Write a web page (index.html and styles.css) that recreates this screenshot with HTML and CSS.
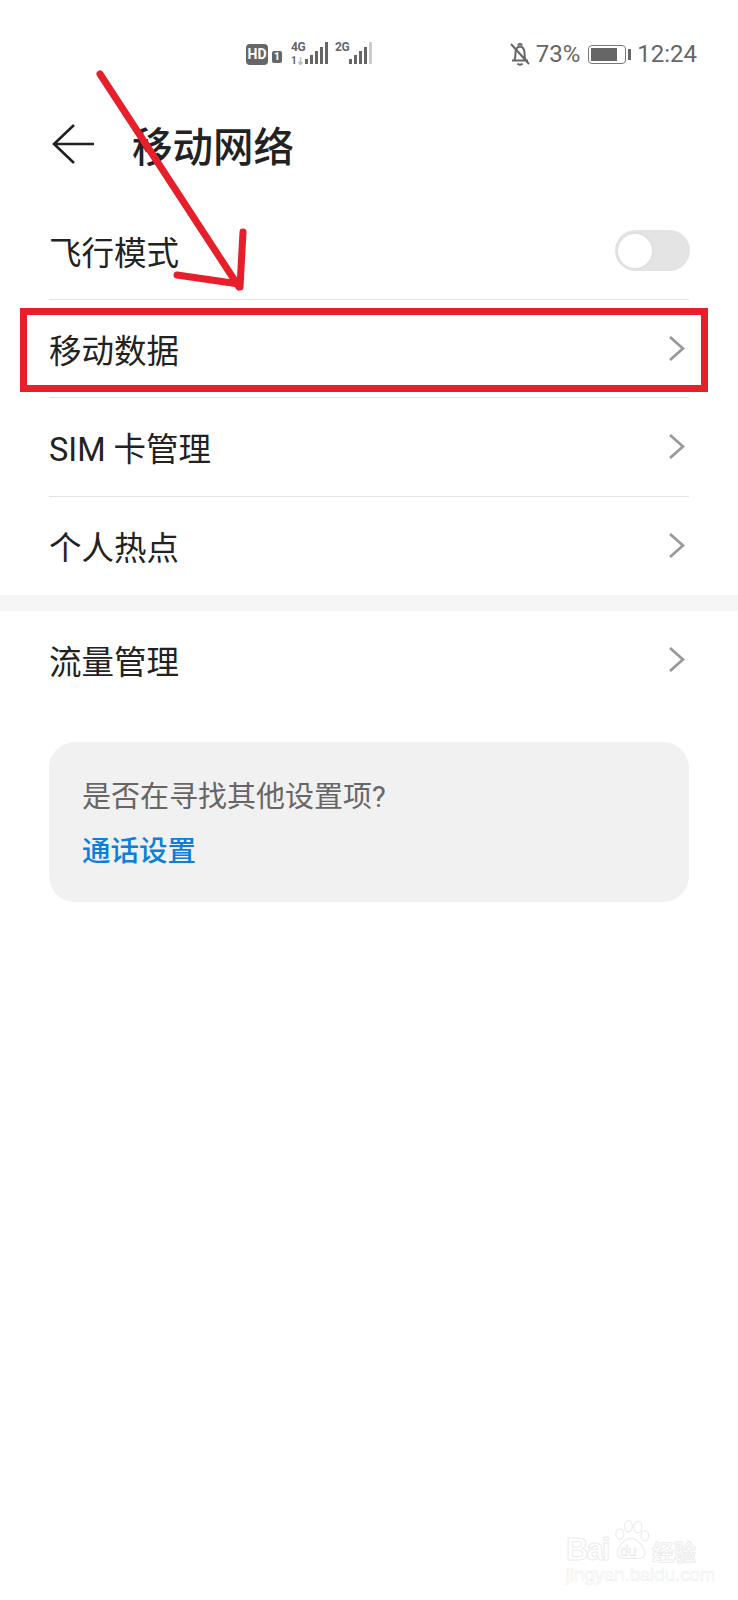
FILE: index.html
```html
<!DOCTYPE html>
<html lang="zh-CN">

<head>
    <meta charset="UTF-8">
    <meta name="viewport" content="width=device-width, initial-scale=1.0">
    <title>移动网络</title>
    <link rel="stylesheet" href="styles.css">
</head>

<body>
    <div class="page">
        <div class="status">
            <div class="net">
                <span class="hd">HD</span>
                <span class="sim-no">1</span>
                <div class="signal sig-first">
                    <span class="gen">4G</span>
                    <span class="sub">1<svg width="5" height="8" viewBox="0 0 5 8"><path d="M2.500 0V8M0.500 5L2.500 8L4.500 5" fill="none" stroke="#bbb" stroke-width="1.400"/></svg></span>
                    <svg class="bars" width="24" height="23" viewBox="0 0 24 23">
                        <rect x="0" y="17" width="3" height="5" fill="#666"/>
                        <rect x="5" y="13" width="3" height="9" fill="#666"/>
                        <rect x="10" y="9" width="3" height="13" fill="#666"/>
                        <rect x="15" y="5" width="3" height="17" fill="#666"/>
                        <rect x="20" y="0" width="3" height="22" fill="#666"/>
                    </svg>
                </div>
                <div class="signal sig-second">
                    <span class="gen">2G</span>
                    <svg class="bars" width="24" height="23" viewBox="0 0 24 23">
                        <rect x="0" y="17" width="3" height="5" fill="#666"/>
                        <rect x="5" y="13" width="3" height="9" fill="#666"/>
                        <rect x="10" y="9" width="3" height="13" fill="#666"/>
                        <rect x="15" y="5" width="3" height="17" fill="#666"/>
                        <rect x="20" y="0" width="3" height="22" fill="#ccc"/>
                    </svg>
                </div>
            </div>
            <div class="sys">
                <svg class="bell" width="22" height="24" viewBox="0 0 22 24">
                    <path d="M3 18.500H19M5 18.500C6.500 16.500 6.500 14 6.500 11C6.500 7.500 8 5 11 4.500C14 5 15.500 7.500 15.500 11C15.500 14 15.500 16.500 17 18.500M9 3.500C9.500 1.500 12.500 1.500 13 3.500M8.500 21.500C9.500 23 12.500 23 13.500 21.500M2 2L20 22" fill="none" stroke="#666" stroke-width="2"/>
                </svg>
                <span class="pct">73%</span>
                <div class="battery"><div class="level"></div></div>
                <div class="tip"></div>
                <span class="clock">12:24</span>
            </div>
        </div>

        <div class="header">
            <svg class="back" width="44" height="44" viewBox="0 0 44 44">
                <path d="M23 3L3 22L23 41M3 22H43" fill="none" stroke="#222" stroke-width="2.600"/>
            </svg>
            <h1>移动网络</h1>
        </div>

        <div class="list">
            <div class="row">
                <span>飞行模式</span>
                <div class="toggle"><div class="knob"></div></div>
            </div>
            <div class="row">
                <span>移动数据</span>
                <svg class="chev" width="17" height="27" viewBox="0 0 17 27"><path d="M2 2L15 13.500L2 25" fill="none" stroke="#999" stroke-width="2.800"/></svg>
            </div>
            <div class="row">
                <span>SIM 卡管理</span>
                <svg class="chev" width="17" height="27" viewBox="0 0 17 27"><path d="M2 2L15 13.500L2 25" fill="none" stroke="#999" stroke-width="2.800"/></svg>
            </div>
            <div class="row">
                <span>个人热点</span>
                <svg class="chev" width="17" height="27" viewBox="0 0 17 27"><path d="M2 2L15 13.500L2 25" fill="none" stroke="#999" stroke-width="2.800"/></svg>
            </div>
        </div>

        <div class="band"></div>

        <div class="list">
            <div class="row">
                <span>流量管理</span>
                <svg class="chev" width="17" height="27" viewBox="0 0 17 27"><path d="M2 2L15 13.500L2 25" fill="none" stroke="#999" stroke-width="2.800"/></svg>
            </div>
        </div>

        <div class="card">
            <p>是否在寻找其他设置项?</p>
            <a href="#">通话设置</a>
        </div>

        <!-- annotation drawn over the screenshot -->
        <div class="redbox"></div>
        <svg class="arrow" width="738" height="320" viewBox="0 0 738 320">
            <path d="M100 74L239 287M243 232L240 287M177 275L239 284" fill="none" stroke="#e61f2b" stroke-width="7" stroke-linecap="round"/>
        </svg>

        <div class="mark">
            <span class="mark-bai">Bai</span>
            <svg class="mark-paw" width="38" height="44" viewBox="0 0 44 50">
                <g fill="#fff" stroke="#ececec" stroke-width="1.400">
                    <ellipse cx="9" cy="17" rx="4.500" ry="6"/>
                    <ellipse cx="19" cy="8" rx="4.500" ry="6.500"/>
                    <ellipse cx="30" cy="9" rx="4.500" ry="6.500"/>
                    <ellipse cx="38" cy="19" rx="4.500" ry="6"/>
                    <path d="M22 22C30 22 38 33 38 39C38 47 28 45 22 45C16 45 6 47 6 39C6 33 14 22 22 22Z"/>
                </g>
            </svg>
            <span class="mark-du">du</span>
            <span class="mark-cn">经验</span>
            <div class="mark-url">jingyan.baidu.com</div>
        </div>
    </div>
</body>

</html>
```

FILE: styles.css
```css
* {
    box-sizing: border-box;
}

html,
body {
    margin: 0;
    background: #fff;
}

.page {
    position: relative;
    width: 738px;
    height: 1600px;
    overflow: hidden;
    font-family: Roboto, "Noto Sans CJK SC", sans-serif;
    color: #222;
}

.status {
    display: flex;
    align-items: center;
    height: 100px;
    padding: 8px 41px 0 246px;
    color: #666;
}

.net {
    display: flex;
    align-items: center;
}

.hd {
    width: 22px;
    height: 21px;
    border-radius: 4px;
    background: #666;
    color: #fff;
    font-size: 14px;
    font-weight: 700;
    line-height: 21px;
    text-align: center;
}

.sim-no {
    width: 10px;
    height: 12px;
    margin: 5px 0 0 4px;
    border-radius: 2px;
    background: #666;
    color: #fff;
    font-size: 11px;
    font-weight: 700;
    line-height: 12px;
    text-align: center;
}

.signal {
    position: relative;
    width: 45px;
    height: 24px;
}

.sig-first {
    margin-left: 9px;
}

.sig-second {
    margin-left: -1px;
}

.gen {
    position: absolute;
    left: 0;
    top: -1px;
    font-size: 12px;
    font-weight: 700;
    line-height: 12px;
    letter-spacing: -0.400px;
}

.sub {
    position: absolute;
    left: 0;
    top: 14px;
    display: flex;
    align-items: center;
    gap: 1px;
    font-size: 10px;
    font-weight: 700;
    line-height: 9px;
}

.bars {
    position: absolute;
    left: 14px;
    top: 0;
}

.sys {
    display: flex;
    align-items: center;
    margin-left: auto;
}

.pct {
    margin-left: 5px;
    font-size: 24px;
    font-weight: 400;
}

.battery {
    width: 38px;
    height: 19px;
    margin-left: 8px;
    padding: 2px;
    border: 1.500px solid #777;
    border-radius: 4px;
}

.level {
    width: 26px;
    height: 100%;
    background: #666;
}

.tip {
    width: 3px;
    height: 11px;
    margin-left: 2px;
    background: #666;
}

.clock {
    margin-left: 6px;
    font-size: 24px;
    font-weight: 400;
}

.header {
    display: flex;
    align-items: center;
    height: 88px;
    margin-bottom: 14px;
    padding-left: 51px;
}

.back {
    flex: none;
}

h1 {
    margin: 0 0 0 37px;
    font-size: 40.500px;
    font-weight: 500;
    letter-spacing: 0;
}

.list {
    padding: 0 49px;
}

.row {
    display: flex;
    align-items: center;
    justify-content: space-between;
    height: 98.200px;
    border-bottom: 1px solid #e3e3e3;
    font-size: 32.500px;
}

.row:last-child {
    border-bottom: none;
}

.chev {
    margin-right: 4px;
}

.toggle {
    display: flex;
    align-items: center;
    width: 75px;
    height: 41px;
    margin-right: -1px;
    padding-left: 1px;
    border-radius: 21px;
    background: #e4e4e4;
}

.knob {
    width: 38px;
    height: 38px;
    border: 2px solid #e0e0e0;
    border-radius: 50%;
    background: #fff;
}

.band {
    height: 16px;
    background: #f6f6f6;
}

.card {
    height: 160px;
    margin: 33px 49px 0;
    padding: 34px 33px 0;
    border-radius: 26px;
    background: #f1f1f1;
}

.card p {
    margin: 0;
    color: #666;
    font-size: 29px;
    line-height: 42px;
}

.card a {
    display: block;
    margin-top: 13px;
    color: #0a7fdc;
    font-size: 28.500px;
    font-weight: 500;
    line-height: 42px;
    text-decoration: none;
}

.redbox {
    position: absolute;
    left: 20px;
    top: 308px;
    width: 688px;
    height: 84px;
    border: 7px solid #e61f2b;
}

.arrow {
    position: absolute;
    left: 0;
    top: 0;
}

.mark {
    position: absolute;
    left: 566px;
    top: 1519px;
    width: 132px;
    height: 62px;
    color: #fff;
    -webkit-text-stroke: 1px #ececec;
}

.mark-bai {
    position: absolute;
    left: 0;
    top: 15px;
    font-family: "Liberation Sans", sans-serif;
    font-size: 31px;
    font-weight: 700;
    line-height: 32px;
    letter-spacing: -2px;
}

.mark-paw {
    position: absolute;
    left: 46px;
    top: 0;
}

.mark-du {
    position: absolute;
    left: 54px;
    top: 24px;
    font-family: "Liberation Sans", sans-serif;
    font-size: 15px;
    line-height: 16px;
    -webkit-text-stroke: 0.500px #e4e4e4;
}

.mark-cn {
    position: absolute;
    left: 86px;
    top: 17px;
    font-family: "Noto Sans CJK SC", sans-serif;
    font-size: 22px;
    font-weight: 700;
    line-height: 28px;
}

.mark-url {
    position: absolute;
    left: 0;
    top: 47px;
    font-family: "Liberation Sans", sans-serif;
    font-size: 18.500px;
    line-height: 18px;
    -webkit-text-stroke: 0.500px #ececec;
}
```
